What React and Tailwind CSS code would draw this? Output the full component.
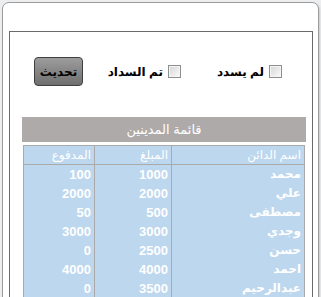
const debtors = [
  { name: 'محمد', amount: 1000, paid: 100 },
  { name: 'علي', amount: 2000, paid: 2000 },
  { name: 'مصطفى', amount: 500, paid: 50 },
  { name: 'وجدي', amount: 3000, paid: 3000 },
  { name: 'حسن', amount: 2500, paid: 0 },
  { name: 'احمد', amount: 4000, paid: 4000 },
  { name: 'عبدالرحيم', amount: 3500, paid: 0 },
]

function Box() {
  return (
    <span className="inline-block flex-none w-[13px] h-[13px] border border-[#8e8f8f] bg-gradient-to-br from-[#d6d6d6] to-[#fbfbfb] shadow-[inset_0_0_0_1px_#f4f4f4]" />
  )
}

export default function App() {
  return (
    <div className="w-[321px] h-[297px] overflow-hidden bg-[#eceef0] pt-[2px] pl-[2px] font-['Liberation_Sans','DejaVu_Sans',sans-serif]">
      <div className="w-[317px] h-[320px] bg-white border border-[#9c9c9c] rounded-[7px] shadow-[1px_1px_2px_rgba(0,0,0,0.15)] pt-[28px] pl-[6px]">
        <div className="w-[304px] h-[300px] border border-[#6b6b6b]" dir="rtl">
          <div className="flex items-center pr-[30px] mt-[25px] h-[29px] whitespace-nowrap">
            <label className="flex flex-none items-center gap-[5px] text-[12px] font-bold text-black">
              <Box />
              <span>لم يسدد</span>
            </label>
            <label className="flex flex-none items-center gap-[5px] text-[12px] font-bold text-black mr-[36px]">
              <Box />
              <span>تم السداد</span>
            </label>
            <button className="flex-none mr-auto ml-[24px] w-[49px] h-[29px] rounded-[4px] border border-[#3f3f3f] bg-gradient-to-b from-[#9d9d9d] to-[#6f6f6f] text-[12px] font-bold text-black">
              تحديث
            </button>
          </div>

          <div className="mt-[31px] mr-[6px] w-[284px] h-[25px] bg-[#aeaaa9] flex items-center justify-center text-white text-[13px]">
            قائمة المدينين
          </div>

          <table className="mt-[3px] mr-[7px] w-[281px] border-collapse border border-[#a9a9a9] bg-[#bdd7ee] text-white text-[12px] table-fixed">
            <colgroup>
              <col className="w-[133px]" />
              <col className="w-[77px]" />
              <col className="w-[71px]" />
            </colgroup>
            <thead>
              <tr className="h-[19px]">
                <th className="p-0 pr-[3px] leading-[18px] font-normal text-right border border-[#aaaaaa]">اسم الدائن</th>
                <th className="p-0 pr-[3px] leading-[18px] font-normal text-right border border-[#aaaaaa]">المبلغ</th>
                <th className="p-0 pr-[3px] leading-[18px] font-normal text-right border border-[#aaaaaa]">المدفوع</th>
              </tr>
            </thead>
            <tbody>
              {debtors.map((d) => (
                <tr key={d.name} className="h-[19px] font-bold">
                  <td className="p-0 pr-[3px] text-right border-x border-[#aaaaaa] leading-[19px]">{d.name}</td>
                  <td className="p-0 pr-[3px] text-right border-x border-[#aaaaaa] leading-[19px] text-[13px]">{d.amount}</td>
                  <td className="p-0 pr-[3px] text-right border-x border-[#aaaaaa] leading-[19px] text-[13px]">{d.paid}</td>
                </tr>
              ))}
            </tbody>
          </table>
        </div>
      </div>
    </div>
  )
}
